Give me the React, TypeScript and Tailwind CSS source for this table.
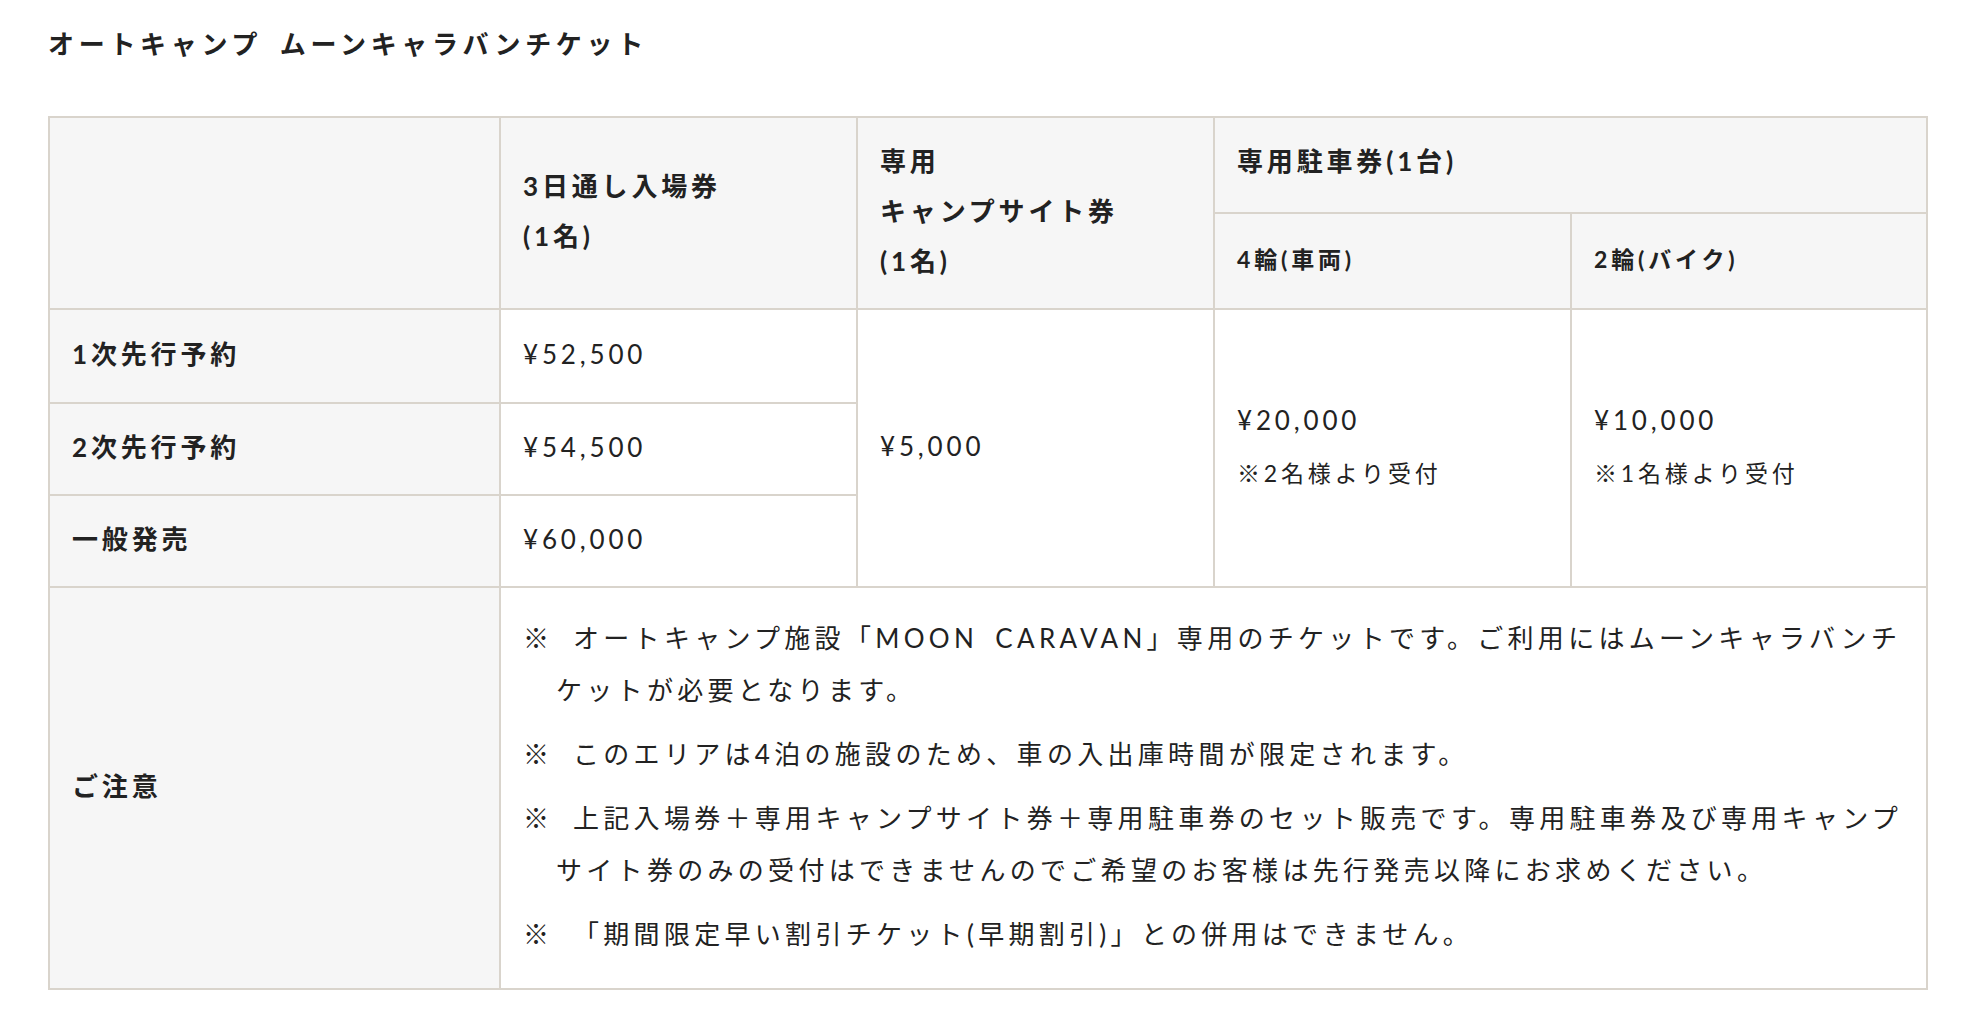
import React from 'react';

// --- 料金データ ---
const priceRows = [
  { label: '1次先行予約', price: '¥52,500' },
  { label: '2次先行予約', price: '¥54,500' },
  { label: '一般発売', price: '¥60,000' },
];

// --- ご注意 (改行位置は元ページに合わせる) ---
const notes = [
  ['オートキャンプ施設「MOON\u2002CARAVAN」専用のチケットです。ご利用にはムーンキャラバンチ', 'ケットが必要となります。'],
  ['このエリアは4泊の施設のため、車の入出庫時間が限定されます。'],
  ['上記入場券＋専用キャンプサイト券＋専用駐車券のセット販売です。専用駐車券及び専用キャンプ', 'サイト券のみの受付はできませんのでご希望のお客様は先行発売以降にお求めください。'],
  ['「期間限定早い割引チケット(早期割引)」との併用はできません。'],
];

const cellBorder = 'border-2 border-[#d9d4cc]';
const headCell = `${cellBorder} bg-[#f6f6f6] px-[22px] pb-[4px] text-left align-middle font-bold`;
const bodyCell = `${cellBorder} bg-white px-[22px] pb-[4px] text-left align-middle font-normal`;

const App: React.FC = () => {
  return (
    <div
      className="min-h-screen bg-white pl-[48px] pr-[44px] pt-[24px] pb-10 text-[#222222] tracking-[3.84px]"
      style={{ fontFamily: '"Lato", "Noto Sans CJK JP", sans-serif' }}
    >
      {/* タイトル */}
      <h2 className="mb-[52px] text-[26px] font-bold leading-[40px] tracking-[4.7px]">
        オートキャンプ{'\u2002'}ムーンキャラバンチケット
      </h2>

      {/* 料金表 */}
      <table className="w-full table-fixed border-collapse">
        <colgroup>
          <col className="w-[451px]" />
          <col className="w-[357px]" />
          <col className="w-[357px]" />
          <col className="w-[357px]" />
          <col />
        </colgroup>
        <thead className="text-[26px] leading-[50px]">
          <tr className="h-[96px]">
            <th rowSpan={2} className={headCell}></th>
            <th rowSpan={2} className={headCell}>
              3日通し入場券
              <br />
              (1名)
            </th>
            <th rowSpan={2} className={headCell}>
              専用
              <br />
              キャンプサイト券
              <br />
              (1名)
            </th>
            <th colSpan={2} className={`${headCell} pb-[8px]`}>
              専用駐車券(1台)
            </th>
          </tr>
          <tr className="h-[96px]">
            <th className={`${headCell} text-[23px]`}>4輪(車両)</th>
            <th className={`${headCell} text-[23px]`}>2輪(バイク)</th>
          </tr>
        </thead>
        <tbody className="text-[26px] leading-[52px]">
          {priceRows.map((row, i) => (
            <tr key={row.label} className={i === 0 ? 'h-[94px]' : 'h-[92px]'}>
              <th className={headCell}>{row.label}</th>
              <td className={bodyCell}>{row.price}</td>
              {i === 0 && (
                <>
                  <td rowSpan={3} className={bodyCell}>
                    ¥5,000
                  </td>
                  <td rowSpan={3} className={bodyCell}>
                    ¥20,000
                    <br />
                    <span className="text-[23px]">※2名様より受付</span>
                  </td>
                  <td rowSpan={3} className={bodyCell}>
                    ¥10,000
                    <br />
                    <span className="text-[23px]">※1名様より受付</span>
                  </td>
                </>
              )}
            </tr>
          ))}
          <tr className="h-[400px]">
            <th className={headCell}>ご注意</th>
            <td
              colSpan={4}
              className={`${cellBorder} bg-white px-[22px] pt-[24px] pb-[28px] text-left align-middle font-normal tracking-[4.3px]`}
            >
              {notes.map((lines, i) => (
                <p key={i} className="mb-[12px] whitespace-nowrap pl-[33px] -indent-[33px] last:mb-0">
                  <span className="inline-block w-[50px] indent-0">※</span>
                  {lines.map((line, j) => (
                    <React.Fragment key={j}>
                      {j > 0 && <br />}
                      {line}
                    </React.Fragment>
                  ))}
                </p>
              ))}
            </td>
          </tr>
        </tbody>
      </table>
    </div>
  );
};

export default App;
